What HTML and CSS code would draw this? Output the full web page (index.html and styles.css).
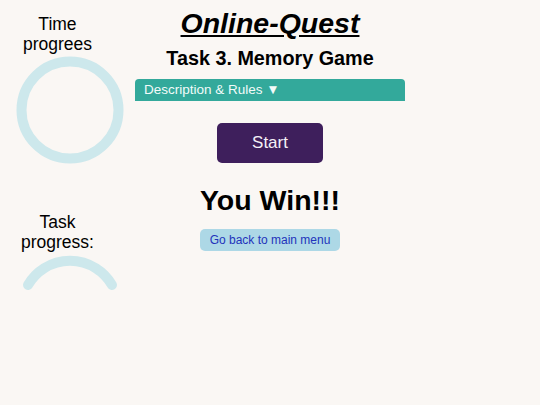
FILE: index.html
```html
<!DOCTYPE html>
<html lang="en">
<head>
    <meta charset="UTF-8">
    <title>Online-Quest</title>
    <link rel="stylesheet" href="styles.css">
</head>
<body>
    <div class="page">
        <div class="sidebar">
            <div class="label">Time<br>progrees</div>
            <svg class="timer" width="110" height="110" viewBox="0 0 110 110">
                <circle cx="55" cy="55" r="48.5" fill="none" stroke="#cde8ec" stroke-width="10"/>
            </svg>
            <div class="label task-label">Task<br>progress:</div>
            <svg class="gauge" width="110" height="44" viewBox="0 0 110 44">
                <path d="M 13 34 A 48.5 48.5 0 0 1 97 34" fill="none" stroke="#cde8ec" stroke-width="10" stroke-linecap="round"/>
            </svg>
        </div>

        <div class="main">
            <h1 class="title">Online-Quest</h1>
            <h2 class="task-title">Task 3. Memory Game</h2>
            <div class="rules">Description &amp; Rules ▼</div>
            <button class="start">Start</button>
            <div class="result">You Win!!!</div>
            <button class="back">Go back to main menu</button>
        </div>
    </div>
</body>
</html>
```

FILE: styles.css
```css
body {
    margin: 0;
    padding: 0;
    background-color: #faf7f4;
    font-family: 'Liberation Sans', Arial, sans-serif;
    color: #000;
}

.page {
    display: flex;
    width: 540px;
    height: 405px;
}

.sidebar {
    width: 140px;
    display: flex;
    flex-direction: column;
    align-items: center;
    padding-top: 14px;
}

.label {
    margin-right: 25px;
    font-size: 17.5px;
    line-height: 20px;
    text-align: center;
}

.timer {
    margin-top: 1px;
}

.task-label {
    margin-top: 47px;
}

.gauge {
    margin-top: -1px;
}

.main {
    width: 270px;
    margin-left: -5px;
    display: flex;
    flex-direction: column;
    align-items: center;
}

.title {
    margin: 7px 0 0;
    font-size: 28.5px;
    line-height: 32px;
    font-style: italic;
    font-weight: bold;
    text-decoration: underline;
}

.task-title {
    margin: 8px 0 0;
    font-size: 19.8px;
    line-height: 22px;
    font-weight: bold;
}

.rules {
    align-self: stretch;
    margin-top: 10px;
    height: 22px;
    line-height: 22px;
    padding-left: 9px;
    background-color: #33a99b;
    color: #f2fbf9;
    font-size: 13.5px;
    border-radius: 4px 4px 0 0;
}

.start {
    margin-top: 22px;
    width: 106px;
    height: 40px;
    border: none;
    border-radius: 5px;
    background-color: #3e1f5c;
    color: #f4f0f7;
    font-family: 'Liberation Sans', Arial, sans-serif;
    font-size: 17px;
}

.result {
    margin-top: 21px;
    font-size: 28.5px;
    line-height: 32px;
    font-weight: bold;
}

.back {
    margin-top: 13px;
    width: 140px;
    height: 22px;
    padding: 0;
    border: none;
    border-radius: 5px;
    background-color: #add8e6;
    color: #2233bb;
    font-family: 'Liberation Sans', Arial, sans-serif;
    font-size: 12px;
}
```
